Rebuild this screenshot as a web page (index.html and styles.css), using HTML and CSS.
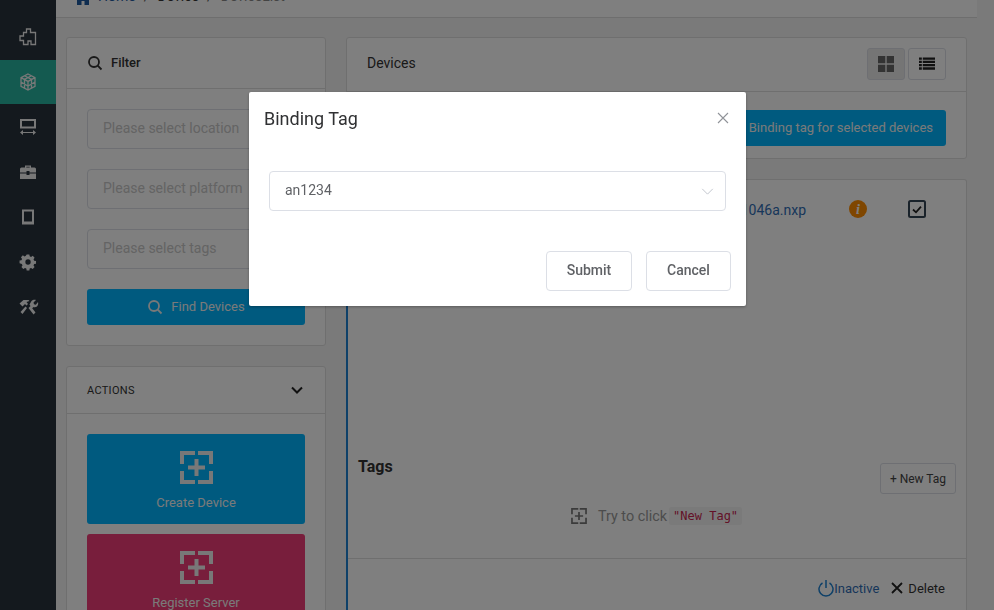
FILE: index.html
```html
<!DOCTYPE html>
<html lang="en">
<head>
<meta charset="utf-8">
<title>Device List</title>
<link rel="stylesheet" href="styles.css">
</head>
<body>
<div class="app">
  <nav class="sidebar">
    <a class="nav-item"><svg class="nav-icon" viewBox="0 0 18 18"><path class="line" d="M7.500 1h4v3.500h5v12H12v-3.500H9v3.500H4.500v-4H1V8h3.500V4.500h3z"/></svg></a>
    <a class="nav-item active"><svg class="nav-icon" viewBox="0 0 18 18"><path class="line" d="M9 1l7 3.600v8.800L9 17l-7-3.600V4.600zM2 4.600L9 8.400l7-3.800M9 8.400V17M5.500 2.800L12.500 6.500v8.700M12.500 2.800L5.500 6.500v8.700M2 9l7 4 7-4"/></svg></a>
    <a class="nav-item"><svg class="nav-icon" viewBox="0 0 18 18"><path class="line wide" d="M2 2h14v7.500H2z"/><path class="fillp" d="M1 14.500l3-2.400v1.900h10v-1.900l3 2.400-3 2.400V15H4v1.900z"/></svg></a>
    <a class="nav-item"><svg class="nav-icon" viewBox="0 0 18 18"><path class="fillp" d="M6 2.500h6v2h3.500A1.500 1.500 0 0 1 17 6v3.500H10.500V8h-3v1.500H1V6a1.500 1.500 0 0 1 1.500-1.500H6zM7.300 3.700v.8h3.400v-.8zM1 10.500h6.500V12h3v-1.500H17V16H1z"/></svg></a>
    <a class="nav-item"><svg class="nav-icon" viewBox="0 0 18 18"><path class="fillp" fill-rule="evenodd" d="M3 1.500h12v15H3zM5 3.500v10h8v-10z"/></svg></a>
    <a class="nav-item"><svg class="nav-icon" viewBox="0 0 18 18"><path class="fillp" fill-rule="evenodd" d="M7.500 1h3l.4 2.100 1.500.7 1.900-1.200 2.100 2.100-1.200 1.900.7 1.500 2.100.4v3l-2.100.4-.7 1.500 1.200 1.900-2.100 2.100-1.900-1.200-1.500.7-.4 2.100h-3l-.4-2.100-1.500-.7-1.900 1.200-2.100-2.100 1.200-1.900-.7-1.500L-.5 11V8l2.100-.4.700-1.500-1.200-1.900 2.100-2.100 1.900 1.200 1.500-.7zM9 6.500a3 3 0 1 0 0 6 3 3 0 0 0 0-6z" transform="translate(1 .5) scale(.89)"/></svg></a>
    <a class="nav-item"><svg class="nav-icon tools" viewBox="0 0 20 18"><path class="fillp" d="M1 5.500L5 2h5l1 1-3 1 1.500 2L8 7.500 6.500 6 4 8.500zM7 8.500l1.500 1.500L4 16l-2-2zM10 10l2-2 5 6.500-2 2zM11 6.500l2-3.500c1-1 3-1.500 4.500-1l-2.500 2.500.5 1.800 1.800.5L19.500 4c.5 1.500 0 3.500-1 4.500-1 .8-2.500 1-3.500.5l-1.500 1.500z"/></svg></a>
  </nav>

  <main class="main">
    <header class="topbar">
      <svg class="home" viewBox="0 0 12 12"><path d="M6 0l6 5v7H7.500V8h-3v4H0V5z"/></svg>
      <span class="crumb link">Home</span><span class="sep">/</span><span class="crumb">Device</span><span class="sep">/</span><span class="crumb muted">DeviceList</span>
    </header>

    <div class="columns">
      <div class="col-left">
        <section class="card filter">
          <div class="card-head">
            <svg class="ico-16" viewBox="0 0 16 16"><circle class="line dark" cx="7" cy="7" r="5"/><path class="line dark" d="M10.700 10.700L14.500 14.500"/></svg>
            <span class="head-title">Filter</span>
          </div>
          <div class="card-body stack">
            <div class="field">Please select location</div>
            <div class="field">Please select platform</div>
            <div class="field">Please select tags</div>
            <button class="btn-primary find">
              <svg class="ico-16" viewBox="0 0 16 16"><circle class="line" cx="7" cy="7" r="5"/><path class="line" d="M10.700 10.700L14.500 14.500"/></svg>
              Find Devices
            </button>
          </div>
        </section>

        <section class="card actions">
          <div class="card-head between">
            <span class="caps">ACTIONS</span>
            <svg class="chev" viewBox="0 0 12 8"><path d="M1 1.500l5 5 5-5"/></svg>
          </div>
          <div class="card-body tiles">
            <a class="tile blue">
              <svg class="tile-icon" viewBox="0 0 33 33"><path d="M2 13V2h13M18 2h13v11M2 20v11h13M31 20v11H18" class="bracket"/><path d="M16.500 8v17M8 16.500h17" class="bracket"/></svg>
              <span>Create Device</span>
            </a>
            <a class="tile red">
              <svg class="tile-icon" viewBox="0 0 33 33"><path d="M2 13V2h13M18 2h13v11M2 20v11h13M31 20v11H18" class="bracket"/><path d="M16.500 8v17M8 16.500h17" class="bracket"/></svg>
              <span>Register Server</span>
            </a>
          </div>
        </section>
      </div>

      <div class="col-right">
        <section class="card devices">
          <div class="card-head between dev-head">
            <span class="dev-title">Devices</span>
            <div class="toggles">
              <button class="toggle on"><svg viewBox="0 0 16 16"><path d="M0 0h7.300v7.300H0zM8.700 0H16v7.300H8.700zM0 8.700h7.300V16H0zM8.700 8.700H16V16H8.700z"/></svg></button>
              <button class="toggle"><svg viewBox="0 0 17 16"><path d="M0 1h3v2.500H0zM4 1h13v2.500H4zM0 4.500h3V7H0zM4 4.500h13V7H4zM0 8h3v2.500H0zM4 8h13v2.500H4zM0 11.500h3V14H0zM4 11.500h13V14H4z"/></svg></button>
            </div>
          </div>
          <div class="bind-row"><button class="btn-primary bind">Binding tag for selected devices</button></div>
        </section>

        <section class="card device-card">
          <div class="device-top">
            <div class="device-row">
              <a class="file">an1046a.nxp</a>
              <svg class="info" viewBox="0 0 18 18"><circle cx="9" cy="9" r="9"/><text x="9" y="14" class="info-i">i</text></svg>
              <svg class="check" viewBox="0 0 18 18"><rect class="check-box" x="1" y="1" width="16" height="16" rx="1.500"/><path class="check-mark" d="M5 9.500l3 2.800 5-5.600"/></svg>
            </div>
            <p class="meta">Category</p>
          </div>
          <div class="tags">
            <div class="tags-head">
              <h3>Tags</h3>
              <button class="new-tag">+ New Tag</button>
            </div>
            <div class="hint">
              <svg class="hint-icon" viewBox="0 0 33 33"><path d="M2 13V2h13M18 2h13v11M2 20v11h13M31 20v11H18" class="hint-line"/><path d="M16.500 8v17M8 16.500h17" class="hint-line"/></svg>
              <span>Try to click</span><code>"New Tag"</code>
            </div>
          </div>
          <div class="device-foot">
            <a class="inactive"><svg class="power" viewBox="0 0 16 18"><path d="M8 1v8M4.500 4A7 7 0 1 0 11.500 4"/></svg>Inactive</a>
            <a class="delete"><svg class="del-x" viewBox="0 0 12 12"><path d="M1 1l10 10M11 1L1 11"/></svg>Delete</a>
          </div>
        </section>
      </div>
    </div>
  </main>
</div>

<div class="overlay"></div>

<div class="modal">
  <div class="modal-head">
    <h2>Binding Tag</h2>
    <svg class="close" viewBox="0 0 12 12"><path d="M1 1l10 10M11 1L1 11"/></svg>
  </div>
  <div class="modal-body">
    <div class="select"><span>an1234</span><svg class="sel-chev" viewBox="0 0 14 8"><path d="M1 1l6 6 6-6"/></svg></div>
  </div>
  <div class="modal-foot">
    <button class="btn-default submit">Submit</button>
    <button class="btn-default">Cancel</button>
  </div>
</div>
</body>
</html>
```

FILE: styles.css
```css
* { box-sizing: border-box; }
html, body { margin: 0; height: 610px; overflow: hidden; }
body { font-family: Roboto, "Liberation Sans", sans-serif; font-size: 14px; color: #333; background: #f4f4f4; }
button { font-family: inherit; cursor: pointer; }
svg { display: block; flex: none; }

.app { display: flex; height: 610px; overflow: hidden; }

.sidebar { width: 56px; flex: none; background: #28323c; padding-top: 15px; }
.nav-item { display: flex; height: 44px; margin-bottom: 1px; align-items: center; justify-content: center; }
.nav-item.active { background: #28b4a0; }
.nav-icon { width: 18px; height: 18px; }
.nav-icon.tools { width: 21px; }
.line { fill: none; stroke: #f0f0f0; stroke-width: 1.3; }
.line.wide { stroke-width: 2; }
.line.dark { stroke: #333; stroke-width: 1.8; }
.fillp { fill: #f0f0f0; }
.ico-16 { width: 16px; height: 16px; }

.main { width: 921px; flex: none; }
.topbar { height: 18px; background: #fff; border-bottom: 1px solid #ddd; display: flex; align-items: flex-end; padding: 0 0 13px 21px; font-size: 14px; line-height: 16px; overflow: hidden; }
.home { width: 12px; height: 12px; fill: #1e5aa0; margin-right: 9px; margin-bottom: -1px; }
.crumb.link { color: #1e5aa0; }
.crumb.muted { color: #888; }
.sep { margin: 0 8px; color: #555; }

.columns { display: flex; gap: 20px; padding: 19px 10px 0; }
.col-left { width: 260px; flex: none; display: flex; flex-direction: column; gap: 20px; }
.col-right { width: 621px; flex: none; display: flex; flex-direction: column; gap: 21px; }

.card { background: #fff; border: 1px solid #dedede; border-radius: 3px; }
.card-head { height: 51px; border-bottom: 1px solid #dedede; display: flex; align-items: center; padding: 0 20px 1px; gap: 8px; }
.card-head.between { justify-content: space-between; }
.head-title { font-weight: 500; font-size: 13px; color: #333; }
.card-body { padding: 20px; }
.stack { display: flex; flex-direction: column; gap: 20px; }

.field { height: 40px; border: 1px solid #dcdfe6; border-radius: 4px; padding: 0 15px 2px; display: flex; align-items: center; color: #c8c8c8; font-size: 14px; white-space: nowrap; }
.btn-primary { height: 36px; background: #00b4ff; border: 0; border-radius: 3px; color: #f4f4f4; font-size: 13px; font-weight: 400; display: flex; align-items: center; justify-content: center; gap: 8px; padding-bottom: 2px; }
.btn-primary .line { stroke-width: 1.8; }

.actions { height: 400px; }
.actions .card-head { height: 47px; padding-bottom: 0; }
.caps { font-size: 11px; font-weight: 400; letter-spacing: .3px; color: #333; }
.chev { width: 12px; height: 8px; fill: none; stroke: #222; stroke-width: 2; margin-right: 2px; }
.tiles { display: flex; flex-direction: column; gap: 10px; }
.tile { height: 90px; border-radius: 3px; color: #f4f4f4; font-size: 13px; font-weight: 400; display: flex; flex-direction: column; align-items: center; padding-top: 17px; gap: 11px; flex: none; }
.tile.blue { background: #00b4ff; }
.tile.red { background: #f03c78; }
.tile-icon { width: 33px; height: 33px; }
.bracket { fill: none; stroke: #f0f0f0; stroke-width: 4; }

.dev-head { height: 54px; padding-bottom: 2px; }
.dev-title { font-size: 14px; color: #333; margin-bottom: 1px; }
.toggles { display: flex; gap: 3px; }
.toggle { width: 38px; height: 32px; background: #fff; border: 1px solid #dcdfe6; border-radius: 3px; display: flex; align-items: center; justify-content: center; padding: 0; }
.toggle svg { width: 16px; height: 16px; fill: #222; }
.toggle.on { background: #ebebeb; }
.toggle.on svg { fill: #666; }
.bind-row { display: flex; justify-content: flex-end; padding: 18px 20px 12px; }
.bind { width: 220px; justify-content: flex-end; padding-right: 13px; }

.device-card { border-left: 2px solid #1e82d2; height: 600px; margin-top: -1px; }
.device-top { height: 277px; }
.device-row { display: flex; align-items: center; justify-content: flex-end; padding: 17px 40px 0 0; height: 40px; }
.file { color: #2f6db5; font-size: 14px; width: 100px; text-align: right; margin-right: 43px; padding-top: 3px; }
.info { width: 18px; height: 18px; margin-right: 41px; }
.info circle { fill: #ff8c00; }
.info-i { fill: #fff; font-family: "Liberation Serif", serif; font-style: italic; font-weight: 700; font-size: 14px; text-anchor: middle; }
.check { width: 18px; height: 18px; }
.check-box { fill: none; stroke: #345; stroke-width: 2; }
.check-mark { fill: none; stroke: #222; stroke-width: 1.800; }
.meta { margin: 68px 0 0 24px; font-size: 14px; color: #333; }

.tags { height: 102px; border-bottom: 1px solid #dedede; padding: 0 10px; }
.tags-head { display: flex; justify-content: space-between; align-items: flex-start; }
.tags-head h3 { margin: 0; font-size: 16px; line-height: 19px; font-weight: 700; color: #333; }
.new-tag { height: 31px; width: 76px; margin-top: 6px; background: #fff; border: 1px solid #dcdfe6; border-radius: 3px; font-size: 12px; color: #444; padding: 0; }
.hint { display: flex; align-items: center; justify-content: center; margin-top: 12px; color: #999; font-size: 14.4px; gap: 2px; height: 20px; padding-right: 1px; }
.hint-icon { width: 16px; height: 16px; margin-right: 9px; }
.hint-line { fill: none; stroke: #777; stroke-width: 3.5; }
.hint code { font-family: "DejaVu Sans Mono", monospace; font-size: 12px; color: #c7254e; background: #f5f5f5; padding: 2px 4px; border-radius: 2px; }

.device-foot { display: flex; justify-content: flex-end; gap: 12px; padding: 20px 21px 0 0; font-size: 13px; align-items: center; }
.inactive { display: flex; align-items: center; color: #2f6db5; }
.delete { display: flex; align-items: center; gap: 5px; color: #333; }
.power { width: 16px; height: 18px; fill: none; stroke: #1e82d2; stroke-width: 1.500; }
.del-x { width: 12px; height: 12px; fill: none; stroke: #222; stroke-width: 1.800; }

.overlay { position: fixed; inset: 0; background: rgba(0,0,0,.5); }

.modal { position: fixed; left: 249px; top: 92px; width: 497px; height: 214px; background: #fff; border-radius: 2px; box-shadow: 0 1px 3px rgba(0,0,0,.3); }
.modal-head { height: 54px; display: flex; align-items: center; justify-content: space-between; padding: 0 17px 2px 15px; }
.modal-head h2 { margin: 0; font-size: 18px; font-weight: 400; color: #303133; }
.close { width: 12px; height: 12px; fill: none; stroke: #909399; stroke-width: 1.100; }
.modal-body { padding: 25px 20px 0; }
.select { height: 40px; border: 1px solid #dcdfe6; border-radius: 4px; padding: 0 11px 2px 15px; display: flex; align-items: center; justify-content: space-between; color: #606266; font-size: 14px; }
.sel-chev { width: 13px; height: 7px; fill: none; stroke: #c0c4cc; stroke-width: 1.100; margin-top: 2px; }
.modal-foot { display: flex; justify-content: flex-end; padding: 40px 15px 0; gap: 14px; }
.btn-default { height: 40px; width: 85px; background: #fff; border: 1px solid #dcdfe6; border-radius: 4px; font-size: 14px; font-weight: 500; color: #606266; padding: 0 0 2px; }
.btn-default.submit { width: 86px; }
```
